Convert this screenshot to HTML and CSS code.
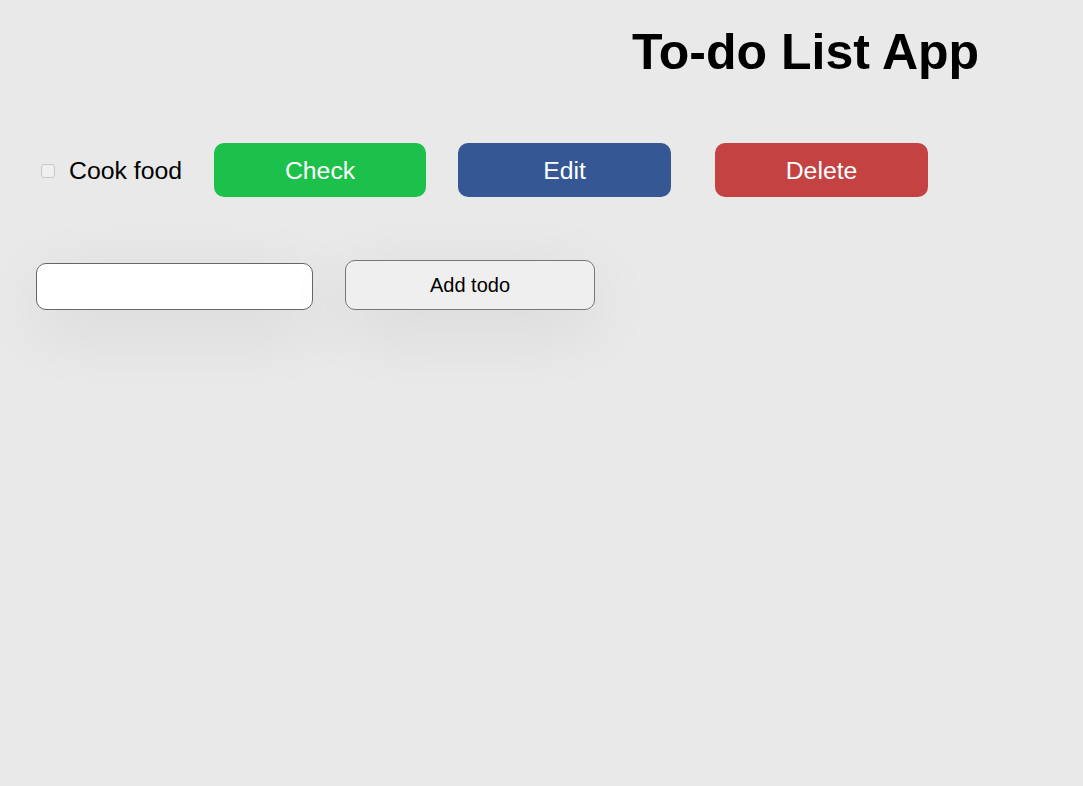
FILE: index.html
```html
<!DOCTYPE html>
<html>
<head>
<meta charset="utf-8">
<link rel="stylesheet" href="styles.css">
</head>
<body>
<h1 class="title">To-do List App</h1>
<ul class="todo-list">
  <li class="todo">
    <label class="todo-label"><input type="checkbox" class="todo-check"><span>Cook food</span></label>
    <button class="btn btn-check">Check</button>
    <button class="btn btn-edit">Edit</button>
    <button class="btn btn-delete">Delete</button>
  </li>
</ul>
<form class="add-form">
  <input type="text" class="add-input">
  <button type="button" class="add-btn">Add todo</button>
</form>
</body>
</html>
```
FILE: styles.css
```css
html, body {
  margin: 0;
  padding: 0;
  background: #e9e9e9;
  font-family: "Liberation Sans", Arial, sans-serif;
  color: #000;
}
body {
  min-height: 100vh;
  overflow: hidden;
}
.title {
  margin: 0;
  padding: 23px 0 0 632px;
  font-size: 50px;
  font-weight: bold;
  line-height: 58px;
}
.todo-list {
  list-style: none;
  margin: 0;
  padding: 62px 0 0 41px;
}
.todo {
  display: flex;
  align-items: center;
  height: 54px;
}
.todo-label {
  display: flex;
  align-items: center;
  font-size: 24.8px;
  margin-right: 32px;
  padding-top: 1px;
}
.todo-check {
  appearance: none;
  -webkit-appearance: none;
  box-sizing: border-box;
  width: 14px;
  height: 14px;
  margin: 0 14px 0 0;
  border: 1px solid #c9c9c9;
  border-radius: 3px;
  background: #efefef;
}
.btn {
  width: 212px;
  height: 54px;
  border: none;
  border-radius: 10px;
  color: #fff;
  font-family: "Liberation Sans", Arial, sans-serif;
  font-size: 24.8px;
  padding: 2px 0 0;
}
.btn-check { background: #1bc14a; margin-right: 32px; }
.btn-edit { background: #355895; margin-right: 44px; width: 213px; }
.btn-delete { background: #c44242; width: 213px; }
.add-form {
  display: flex;
  align-items: flex-end;
  padding: 63px 0 0 36px;
}
.add-input {
  box-sizing: border-box;
  width: 277px;
  height: 47px;
  border: 1px solid #666;
  border-radius: 10px;
  background: #fff;
  margin: 0 32px 0 0;
  box-shadow: 0 18px 70px rgba(0,0,0,0.08);
}
.add-btn {
  box-sizing: border-box;
  width: 250px;
  height: 50px;
  border: 1px solid #777;
  border-radius: 10px;
  background: #efefef;
  font-family: "Liberation Sans", Arial, sans-serif;
  font-size: 20px;
  color: #000;
  box-shadow: 0 18px 70px rgba(0,0,0,0.08);
}
```
